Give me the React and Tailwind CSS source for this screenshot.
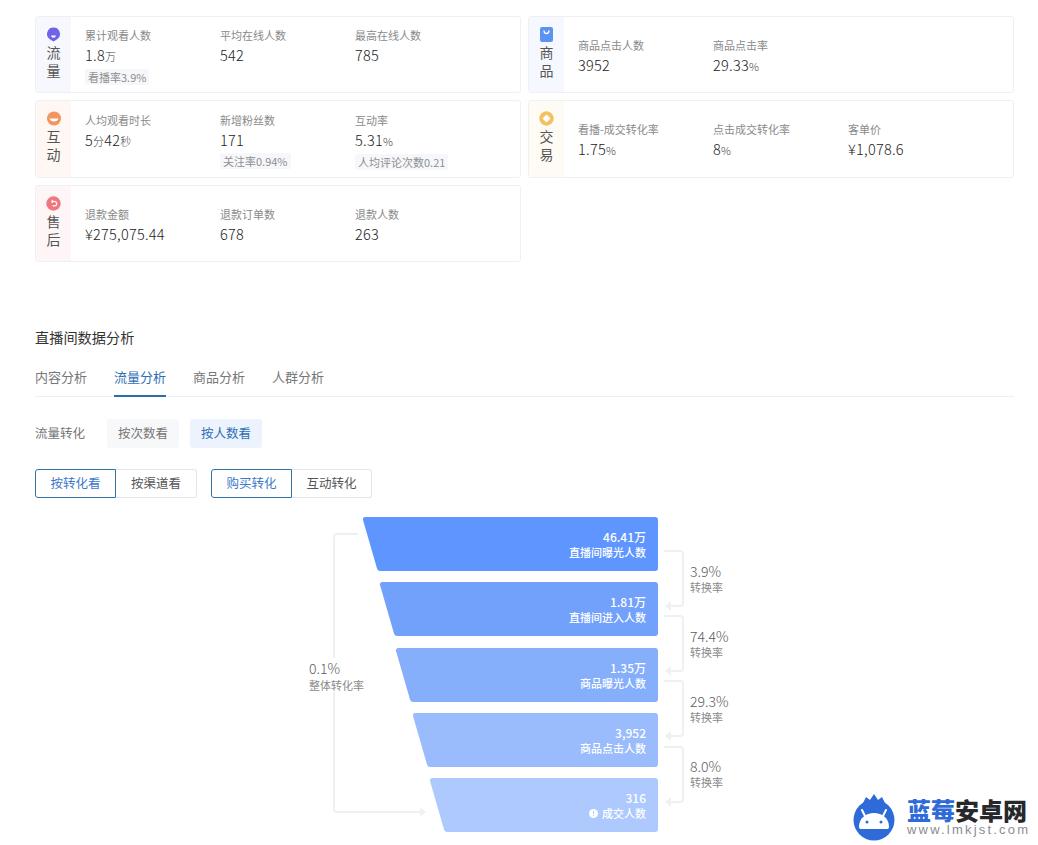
const font = { fontFamily: '"Noto Sans CJK SC", "Noto Sans", sans-serif' };

function Icon({ kind }) {
  if (kind === 'flow')
    return (
      <svg width="15" height="15" viewBox="0 0 15 15">
        <path d="M7.5.5a6.5 6.5 0 0 1 4 11.6L7.5 14.5l-4-2.4A6.5 6.5 0 0 1 7.5.5z" fill="#7163e8" />
        <path d="M5 8.5h5l-1 2H6z" fill="#fff" />
      </svg>
    );
  if (kind === 'talk')
    return (
      <svg width="16" height="15" viewBox="0 0 16 15">
        <circle cx="8" cy="7.5" r="7" fill="#f2955f" />
        <path d="M3.5 7.5h9c-.5 2-2.200 3-4.500 3s-4-1-4.500-3z" fill="#fff" />
      </svg>
    );
  if (kind === 'after')
    return (
      <svg width="15" height="15" viewBox="0 0 15 15">
        <circle cx="7.5" cy="7.500" r="7.200" fill="#f0767f" />
        <path d="M5.500 5.500h3a2.200 2.200 0 0 1 0 4.400H6.500M5.500 5.500l1.500-1.300M5.500 5.500l1.500 1.300" fill="none" stroke="#fff" strokeWidth="1.200" />
      </svg>
    );
  if (kind === 'goods')
    return (
      <svg width="13" height="15" viewBox="0 0 13 15">
        <rect width="13" height="15" rx="2" fill="#5c93f2" />
        <path d="M4 3.500c0 2 1.200 3 2.500 3S9 5.500 9 3.500" fill="none" stroke="#fff" strokeWidth="1.300" />
      </svg>
    );
  return (
    <svg width="15" height="15" viewBox="0 0 15 15">
      <circle cx="7.500" cy="7.500" r="7.200" fill="#f2c163" />
      <path d="M7.500 3.500l4 4-4 4-4-4z" fill="#fff" />
    </svg>
  );
}

function Metric({ label, value, unit, value2, unit2, tag }) {
  return (
    <div className="flex flex-col items-start">
      <div className="text-[11px] leading-[16px] text-[#8a8a8a]">{label}</div>
      <div className="mt-[1px] text-[14.5px] font-light leading-[22px] tracking-[0.25px] text-[#222222]">
        {value}
        {unit && <span className="text-[11px] text-[#444444]">{unit}</span>}
        {value2}
        {unit2 && <span className="text-[11px] text-[#444444]">{unit2}</span>}
      </div>
      {tag && (
        <div className="mt-[2px] h-[16px] rounded-[2px] bg-[#f6f7fa] px-[3px] text-[11px] leading-[16px] text-[#8f8f8f]">{tag}</div>
      )}
    </div>
  );
}

function Card({ kind, chars, band, items, top }) {
  return (
    <div className="flex overflow-hidden rounded-[3px] border border-[#eff0f3] bg-white">
      <div className={`flex w-[35px] shrink-0 flex-col items-center pt-[10px] ${band}`}>
        <Icon kind={kind} />
        <div className="mt-[1px] text-[14px] leading-[18px] text-[#555555]">{chars[0]}</div>
        <div className="text-[14px] leading-[18px] text-[#555555]">{chars[1]}</div>
      </div>
      <div className={`grid flex-1 grid-cols-[135px_135px_135px] pl-[14px] ${top}`}>
        {items.map((m) => (
          <Metric key={m.label} {...m} />
        ))}
      </div>
    </div>
  );
}

const rows = [
  { off: 0, fill: '#5f95fe', a: '46.41万', b: '直播间曝光人数' },
  { off: 17, fill: '#72a1fc', a: '1.81万', b: '直播间进入人数' },
  { off: 33, fill: '#85aefb', a: '1.35万', b: '商品曝光人数' },
  { off: 50, fill: '#9abcfc', a: '3,952', b: '商品点击人数' },
  { off: 67, fill: '#adc9fd', a: '316', b: '成交人数', info: true },
];

const rates = [
  { v: '3.9%', cls: 'top-[45px]' },
  { v: '74.4%', cls: 'top-[110px]' },
  { v: '29.3%', cls: 'top-[175px]' },
  { v: '8.0%', cls: 'top-[240px]' },
];

function Funnel() {
  return (
    <div className="relative -mx-[35px] mt-[19px] h-[316px]">
      <svg className="absolute left-0 top-0" width="800" height="316" fill="none" stroke="#eef0f2" strokeWidth="2">
        <path d="M358 17H337a3 3 0 0 0-3 3V292a3 3 0 0 0 3 3H420" />
        <path d="M420 290.500l6 4.500-6 4.500z" fill="#eef0f2" stroke="none" />
        {[0, 65, 130, 196].map((y) => (
          <g key={y}>
            <path d={`M664 ${34 + y}H680a3 3 0 0 1 3 3V${86 + y}a3 3 0 0 1-3 3H668`} />
            <path d={`M671 ${84 + y}l-6 5 6 5z`} fill="#eef0f2" stroke="none" />
          </g>
        ))}
      </svg>
      <div className="absolute left-[309px] top-[141px] bg-white">
        <div className="text-[14px] font-light leading-[20px] text-[#5c5c5c]">0.1%</div>
        <div className="text-[11px] leading-[14px] text-[#8a8a8a]">整体转化率</div>
      </div>
      {rates.map((r) => (
        <div key={r.v} className={`absolute left-[690px] ${r.cls}`}>
          <div className="text-[14px] font-light leading-[18px] text-[#5c5c5c]">{r.v}</div>
          <div className="text-[11px] leading-[14px] text-[#8a8a8a]">转换率</div>
        </div>
      ))}
      <div className="ml-[363px] flex w-[295px] flex-col gap-[11.25px]">
        {rows.map((r) => (
          <div key={r.a} className="relative h-[54px] pr-[12px] pt-[12px] text-right text-white">
            <svg className="absolute left-0 top-0" width="295" height="54">
              <path
                d={`M${r.off + 2} 0H292a3 3 0 0 1 3 3V51a3 3 0 0 1-3 3H${r.off + 17}a3 3 0 0 1-3-2.500L${r.off} 3a2.500 2.500 0 0 1 2-3z`}
                fill={r.fill}
              />
            </svg>
            <div className="relative text-[12px] font-medium leading-[16px]">{r.a}</div>
            <div className="relative flex items-center justify-end gap-[4px] text-[11px] font-medium leading-[14px]">
              {r.info && (
                <svg width="9" height="9" viewBox="0 0 9 9">
                  <circle cx="4.500" cy="4.500" r="4.500" fill="#fff" />
                  <rect x="4" y="2" width="1" height="3" fill="#adc9fd" />
                  <rect x="4" y="6" width="1" height="1" fill="#adc9fd" />
                </svg>
              )}
              {r.b}
            </div>
          </div>
        ))}
      </div>
    </div>
  );
}

function Logo() {
  return (
    <div className="absolute bottom-[3px] right-[9px] flex items-center gap-[10px] pl-[4px]">
      <svg width="46" height="50" viewBox="0 0 46 50">
        <path d="M12 11L15 5l4 3 4-6 4 6 4-3 3 6z" fill="#2f6bd8" />
        <circle cx="23" cy="28" r="20.500" fill="#2f6bd8" />
        <path d="M8 35c0-9 7-14 15-14s15 5 15 14c0 1.500-1 2-2 2H10c-1 0-2-.5-2-2z" fill="#fff" />
        <path d="M14 24l-3-6M32 24l3-6" stroke="#fff" strokeWidth="2" strokeLinecap="round" />
        <circle cx="16" cy="30" r="1.500" fill="#2f6bd8" />
        <circle cx="30" cy="30" r="1.500" fill="#2f6bd8" />
      </svg>
      <div className="flex w-[122px] flex-col">
        <div className="flex h-[26px] whitespace-nowrap text-[24px] font-black leading-[26px]">
          <div className="text-[#2f6bd8]">蓝莓</div>
          <div className="text-[#26282c]">安卓网</div>
        </div>
        <div className="whitespace-nowrap text-[13px] leading-[14px] tracking-[2.2px] text-[#8a8d92]" style={{ fontFamily: '"Liberation Sans", sans-serif' }}>
          www.lmkjst.com
        </div>
      </div>
    </div>
  );
}

export default function App() {
  return (
    <div className="relative h-[845px] w-[1038px] overflow-hidden bg-white px-[35px] pt-[16px]" style={font}>
      <div className="grid w-[979px] grid-cols-2 grid-rows-[77px_78px_77px] gap-[7px]">
        <Card
          kind="flow"
          chars="流量"
          band="bg-[#f7f7fe]"
          top="pt-[10px]"
          items={[
            { label: '累计观看人数', value: '1.8', unit: '万', tag: '看播率3.9%' },
            { label: '平均在线人数', value: '542' },
            { label: '最高在线人数', value: '785' },
          ]}
        />
        <Card
          kind="goods"
          chars="商品"
          band="bg-[#f5f8fe]"
          top="pt-[20px]"
          items={[
            { label: '商品点击人数', value: '3952' },
            { label: '商品点击率', value: '29.33', unit: '%' },
          ]}
        />
        <Card
          kind="talk"
          chars="互动"
          band="bg-[#fef7f4]"
          top="pt-[11px]"
          items={[
            { label: '人均观看时长', value: '5', unit: '分', value2: '42', unit2: '秒' },
            { label: '新增粉丝数', value: '171', tag: '关注率0.94%' },
            { label: '互动率', value: '5.31', unit: '%', tag: '人均评论次数0.21' },
          ]}
        />
        <Card
          kind="deal"
          chars="交易"
          band="bg-[#fefbf5]"
          top="pt-[20px]"
          items={[
            { label: '看播-成交转化率', value: '1.75', unit: '%' },
            { label: '点击成交转化率', value: '8', unit: '%' },
            { label: '客单价', value: '¥1,078.6' },
          ]}
        />
        <Card
          kind="after"
          chars="售后"
          band="bg-[#fef6f6]"
          top="pt-[20px]"
          items={[
            { label: '退款金额', value: '¥275,075.44' },
            { label: '退款订单数', value: '678' },
            { label: '退款人数', value: '263' },
          ]}
        />
      </div>

      <div className="mt-[64px] w-[979px] text-[14.200px] leading-[22px] text-[#333333]">直播间数据分析</div>

      <div className="mt-[18px] flex h-[31px] w-[979px] gap-[27px] border-b border-[#eceef1] text-[13px] leading-[22px] text-[#777777]">
        <div>内容分析</div>
        <div className="h-[31px] border-b-2 border-[#2f6fa8] text-[#2f6fb5]">流量分析</div>
        <div>商品分析</div>
        <div>人群分析</div>
      </div>

      <div className="mt-[22px] flex h-[29px] items-center text-[12.500px] text-[#777777]">
        <div className="w-[72px]">流量转化</div>
        <div className="flex h-[29px] w-[72px] items-center justify-center rounded-[3px] bg-[#f7f8fa]">按次数看</div>
        <div className="ml-[11px] flex h-[29px] w-[72px] items-center justify-center rounded-[3px] bg-[#edf3fc] text-[#2f6fb5]">按人数看</div>
      </div>

      <div className="mt-[21px] flex h-[29px] text-[12.500px] text-[#555555]">
        <div className="flex w-[81px] items-center justify-center rounded-l-[3px] border border-[#2f75a8] text-[#3d78c9]">按转化看</div>
        <div className="flex w-[81px] items-center justify-center rounded-r-[3px] border border-l-0 border-[#e3e5e8]">按渠道看</div>
        <div className="ml-[14px] flex w-[81px] items-center justify-center rounded-l-[3px] border border-[#2f75a8] text-[#3d78c9]">购买转化</div>
        <div className="flex w-[80px] items-center justify-center rounded-r-[3px] border border-l-0 border-[#e3e5e8]">互动转化</div>
      </div>

      <Funnel />
      <Logo />
    </div>
  );
}
